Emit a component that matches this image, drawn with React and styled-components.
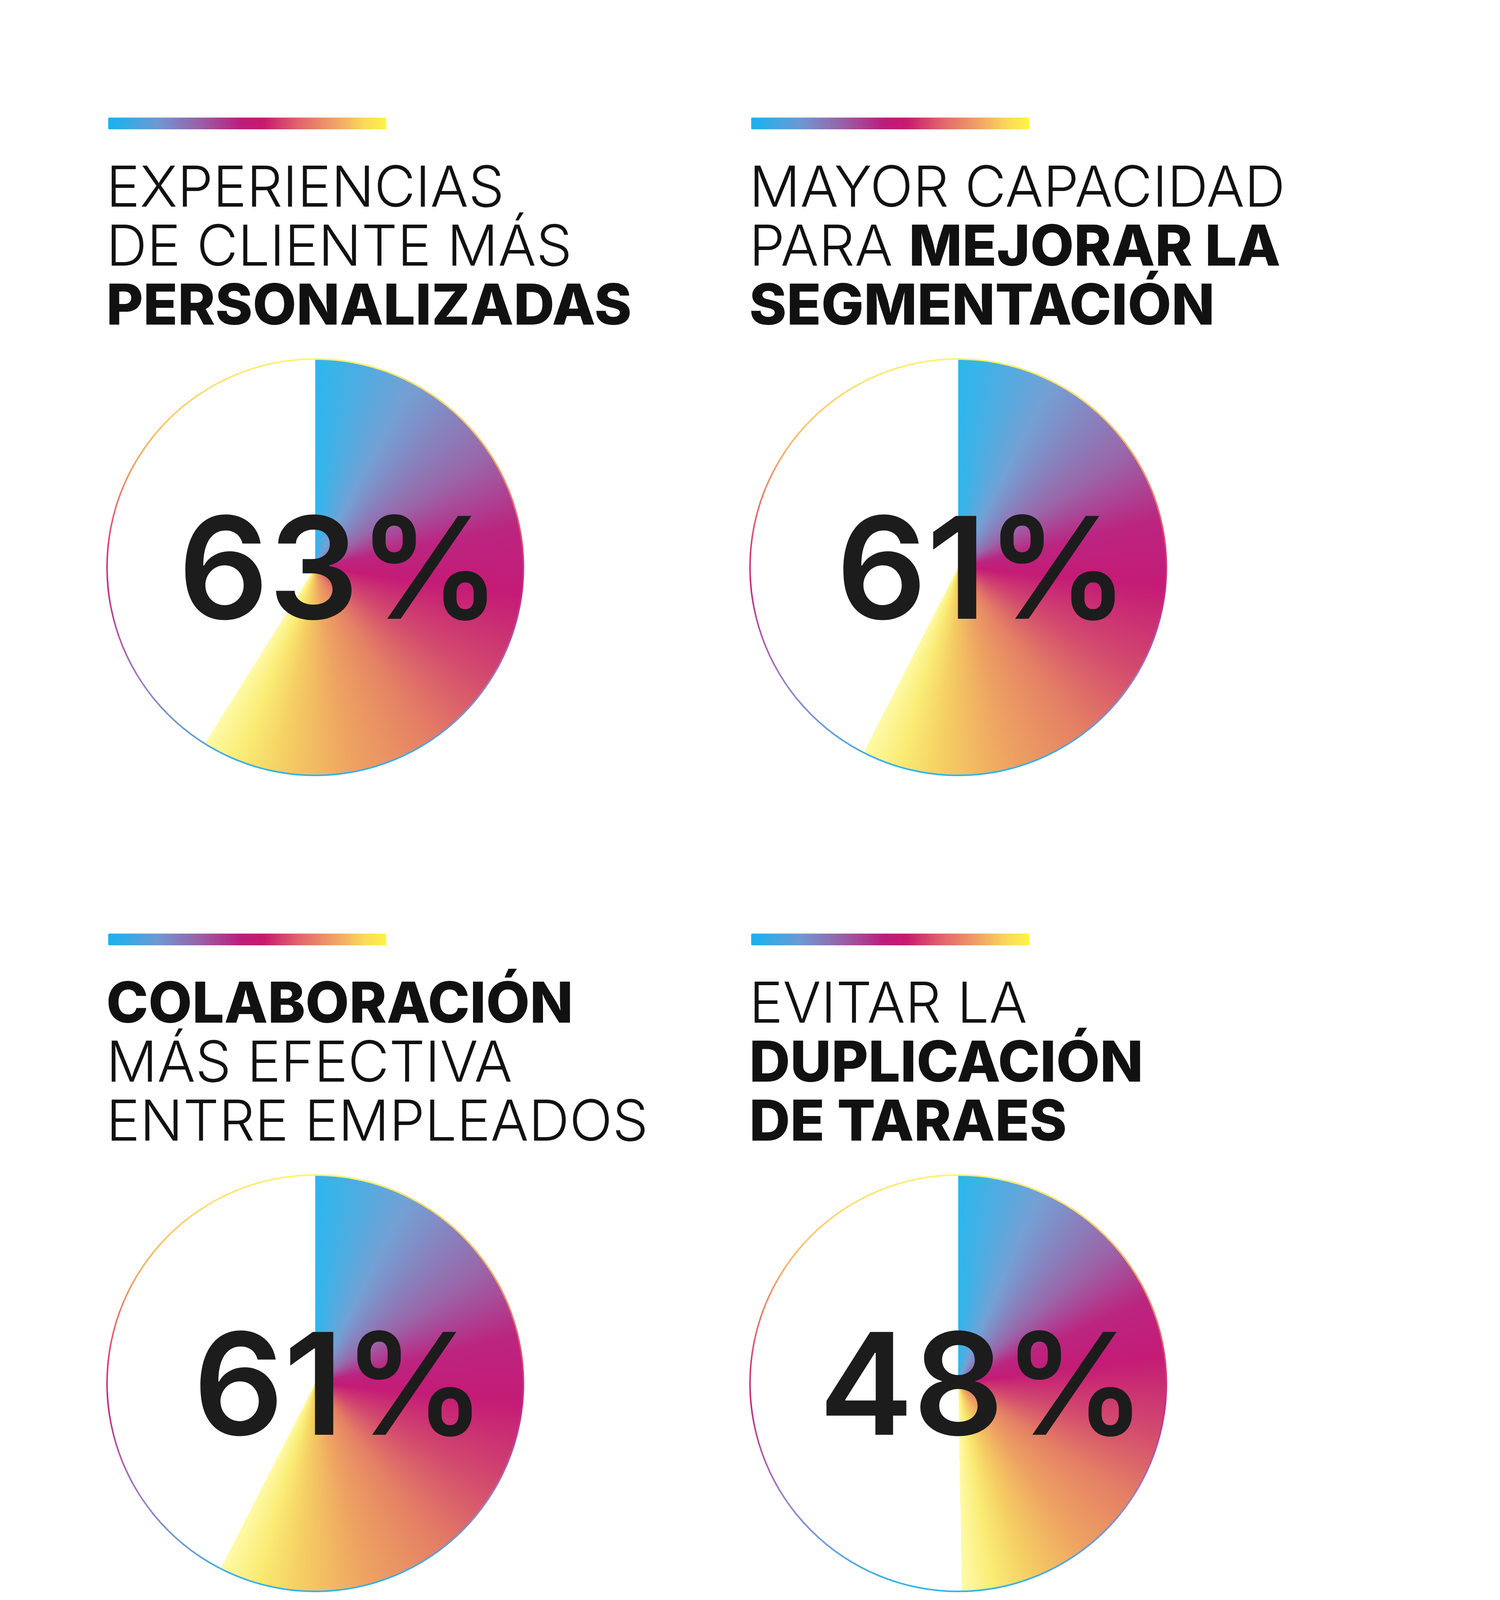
import styled, { createGlobalStyle } from 'styled-components';

const GlobalStyle = createGlobalStyle`
  html, body {
    margin: 0;
    padding: 0;
    background: #ffffff;
  }
  body {
    font-family: Inter, "Liberation Sans", sans-serif;
    color: #111111;
  }
`;

const Page = styled.main`
  width: 3840px;
  height: 6221px;
  overflow: hidden;
  box-sizing: border-box;
  padding: 301px 0 0 272px;
  display: flex;
  flex-direction: column;
`;

const Row = styled.section`
  display: grid;
  grid-template-columns: 1646px 1646px;
  align-items: start;
  margin-top: ${(p) => p.$top || 0}px;
`;

const Card = styled.article`
  display: flex;
  flex-direction: column;
  align-items: flex-start;
`;

const Bar = styled.div`
  width: 712px;
  height: 30px;
  margin-left: 5px;
  border-radius: 3px;
  background: linear-gradient(
    90deg,
    #16b4ef 0%,
    #6f97d2 18%,
    #9a5fa6 33%,
    #bb1d7c 48%,
    #c81a70 56%,
    #e0626a 68%,
    #f0a468 82%,
    #fbd85a 92%,
    #fff443 100%
  );
`;

const Title = styled.h2`
  margin: 70px 0 0;
  font-size: 145px;
  line-height: 151px;
  font-weight: 300;
  color: #111111;
  white-space: nowrap;
`;

const TitleLine = styled.span`
  display: block;
`;

const Strong = styled.strong`
  font-weight: 800;
`;

const Pie = styled.div`
  position: relative;
  margin-top: 63px;
  width: 1070px;
  height: 1070px;
  box-sizing: border-box;
  padding: 4px;
  border-radius: 50%;
  background: linear-gradient(
    180deg,
    #fff36a 0%,
    #f6b163 22%,
    #db3f78 45%,
    #c22a86 55%,
    #9b80c2 78%,
    #27b6ee 100%
  );
`;

const Face = styled.div`
  width: 100%;
  height: 100%;
  border-radius: 50%;
  background: ${({ $end: e }) => `conic-gradient(
    from 0deg,
    #2bb8ee 0deg,
    #74a0d4 ${e * 0.13}deg,
    #9a66a9 ${e * 0.27}deg,
    #bb2580 ${e * 0.37}deg,
    #c41b76 ${e * 0.46}deg,
    #d24a6e ${e * 0.58}deg,
    #e47f65 ${e * 0.69}deg,
    #eea362 ${e * 0.8}deg,
    #f5cd63 ${e * 0.89}deg,
    #faec74 ${e * 0.95}deg,
    #fffaa8 ${e}deg,
    #ffffff ${e}deg
  )`};
`;

const Value = styled.span`
  position: absolute;
  inset: 0;
  display: flex;
  align-items: center;
  justify-content: center;
  padding-left: 124px;
  font-size: 362px;
  line-height: 362px;
  font-weight: 600;
  color: #1c1c1c;
`;

const Notes = styled.div`
  margin-top: 197px;
  width: 1262px;
  font-size: 66px;
  line-height: 91px;
  font-weight: 300;
  font-style: italic;
  letter-spacing: 4px;
  color: #1a1a1a;
`;

const Para = styled.p`
  margin: 0 0 91px;
`;

const NoteLine = styled.span`
  display: block;
  white-space: nowrap;
  text-align: ${(p) => (p.$justify ? 'justify' : 'left')};
  text-align-last: ${(p) => (p.$justify ? 'justify' : 'left')};
`;

const Label = styled.b`
  font-style: normal;
  font-weight: 700;
  letter-spacing: 1px;
`;

const Colon = styled.span`
  font-style: normal;
`;

const Stat = ({ title, value, end }) => (
  <Card>
    <Bar />
    <Title>{title}</Title>
    <Pie>
      <Face $end={end} />
      <Value>{value}</Value>
    </Pie>
  </Card>
);

const Sources = () => (
  <Card>
    <Bar />
    <Title>
      <TitleLine>BASE Y FUENTE</TitleLine>
    </Title>
    <Notes>
      <Para>
        <NoteLine $justify>
          <Label>BASE</Label>
          <Colon>:</Colon> 301 PROFESIONALES DEL
        </NoteLine>
        <NoteLine $justify>MARKETING ESTADOUNIDENSES</NoteLine>
        <NoteLine $justify>RESPONSABLES DE LA</NoteLine>
        <NoteLine $justify>INTEGRACIÓN Y ACTIVACIÓN DE</NoteLine>
        <NoteLine $justify>HERRAMIENTAS DE IDENTIDAD DEL</NoteLine>
        <NoteLine>CLIENTE</NoteLine>
      </Para>
      <Para>
        <NoteLine $justify>
          <Label>FUENTE</Label>
          <Colon>:</Colon> ESTUDIO ENCARGADO
        </NoteLine>
        <NoteLine $justify>REALIZADO POR FORRESTER</NoteLine>
        <NoteLine>CONSULTING EN NOMBRE DE ZETA,</NoteLine>
        <NoteLine>FEBRERO DE 2023</NoteLine>
      </Para>
    </Notes>
  </Card>
);

export default function App() {
  return (
    <>
      <GlobalStyle />
      <Page>
        <Row>
          <Stat
            value="63%"
            end={212}
            title={
              <>
                <TitleLine>EXPERIENCIAS</TitleLine>
                <TitleLine>DE CLIENTE MÁS</TitleLine>
                <TitleLine>
                  <Strong>PERSONALIZADAS</Strong>
                </TitleLine>
              </>
            }
          />
          <Stat
            value="61%"
            end={207}
            title={
              <>
                <TitleLine>MAYOR CAPACIDAD</TitleLine>
                <TitleLine>
                  PARA <Strong>MEJORAR LA</Strong>
                </TitleLine>
                <TitleLine>
                  <Strong>SEGMENTACIÓN</Strong>
                </TitleLine>
              </>
            }
          />
        </Row>
        <Row $top={403}>
          <Stat
            value="61%"
            end={207}
            title={
              <>
                <TitleLine>
                  <Strong>COLABORACIÓN</Strong>
                </TitleLine>
                <TitleLine>MÁS EFECTIVA</TitleLine>
                <TitleLine>ENTRE EMPLEADOS</TitleLine>
              </>
            }
          />
          <Stat
            value="48%"
            end={179}
            title={
              <>
                <TitleLine>EVITAR LA</TitleLine>
                <TitleLine>
                  <Strong>DUPLICACIÓN</Strong>
                </TitleLine>
                <TitleLine>
                  <Strong>DE TARAES</Strong>
                </TitleLine>
              </>
            }
          />
        </Row>
        <Row $top={158}>
          <Stat
            value="60%"
            end={210}
            title={
              <>
                <TitleLine>
                  MENOR <Strong>TIEMPO DE</Strong>
                </TitleLine>
                <TitleLine>
                  <Strong>LANZAMIENTO</Strong>
                </TitleLine>
                <TitleLine>DE CAMPAÑAS</TitleLine>
              </>
            }
          />
          <Sources />
        </Row>
      </Page>
    </>
  );
}
